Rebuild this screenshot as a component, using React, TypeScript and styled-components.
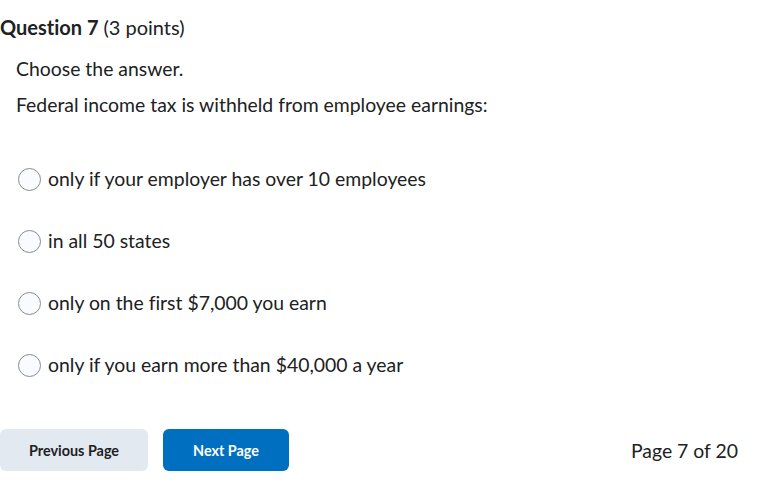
import React from "react";
import styled, { createGlobalStyle } from "styled-components";

const GlobalStyle = createGlobalStyle`
  body {
    margin: 0;
    background: #ffffff;
    font-family: Lato, "Noto Sans", sans-serif;
    font-variant-ligatures: none;
    color: #202122;
  }
`;

const Page = styled.div`
  width: 768px;
  height: 502px;
  box-sizing: border-box;
  padding-top: 13px;
`;

const Heading = styled.h2`
  margin: 0;
  font-size: 20px;
  line-height: 28px;
  font-weight: 700;
  color: #202122;

  span {
    font-weight: 400;
  }
`;

const Body = styled.div`
  padding: 0 16px;
`;

const Para = styled.p<{ $top: number }>`
  margin: 0;
  font-size: 19.4px;
  line-height: 28px;
  margin-top: ${(p) => p.$top}px;
`;

const Options = styled.div`
  display: flex;
  flex-direction: column;
  gap: 34px;
  margin-top: 46px;
  padding-left: 2px;
`;

const Option = styled.label`
  display: flex;
  align-items: center;
  gap: 7px;
  font-size: 19.4px;
  line-height: 28px;
`;

const Radio = styled.span`
  width: 21px;
  height: 21px;
  border-radius: 50%;
  border: 1px solid #868c8f;
  background: #f9fbff;
  flex-shrink: 0;
`;

const Footer = styled.div`
  display: flex;
  align-items: center;
  margin-top: 50px;
  padding-right: 30px;
`;

const Button = styled.button<{ $primary?: boolean }>`
  height: 42px;
  padding: 0 ${(p) => (p.$primary ? 30 : 29)}px;
  border: none;
  border-radius: 6px;
  font-family: Lato, "Noto Sans", sans-serif;
  font-variant-ligatures: none;
  font-size: 14.4px;
  font-weight: 700;
  background: ${(p) => (p.$primary ? "#006fbf" : "#e3e9f1")};
  color: ${(p) => (p.$primary ? "#ffffff" : "#202122")};
  margin-right: 15px;
`;

const PageCount = styled.div`
  margin-left: auto;
  font-size: 19.4px;
`;

const options = [
  "only if your employer has over 10 employees",
  "in all 50 states",
  "only on the first $7,000 you earn",
  "only if you earn more than $40,000 a year",
];

export default function App() {
  return (
    <Page>
      <GlobalStyle />
      <Heading>
        Question 7 <span>(3 points)</span>
      </Heading>
      <Body>
        <Para $top={14}>Choose the answer.</Para>
        <Para $top={8}>Federal income tax is withheld from employee earnings:</Para>
        <Options>
          {options.map((o) => (
            <Option key={o}>
              <Radio />
              {o}
            </Option>
          ))}
        </Options>
      </Body>
      <Footer>
        <Button>Previous Page</Button>
        <Button $primary>Next Page</Button>
        <PageCount>Page 7 of 20</PageCount>
      </Footer>
    </Page>
  );
}
